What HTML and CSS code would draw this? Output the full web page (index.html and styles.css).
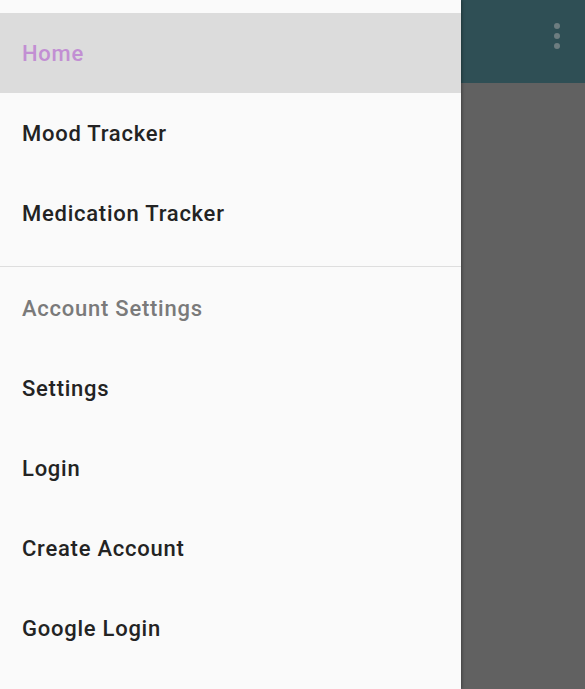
FILE: index.html
```html
<!DOCTYPE html>
<html>
<head>
<meta charset="utf-8">
<link rel="stylesheet" href="styles.css">
</head>
<body>
<div class="screen">
  <nav class="drawer">
    <div class="drawer-top"></div>
    <div class="item active">Home</div>
    <div class="item">Mood Tracker</div>
    <div class="item">Medication Tracker</div>
    <div class="divider"></div>
    <div class="item header">Account Settings</div>
    <div class="item">Settings</div>
    <div class="item">Login</div>
    <div class="item">Create Account</div>
    <div class="item">Google Login</div>
  </nav>
  <div class="content">
    <div class="toolbar">
      <div class="menu-dots"><span></span><span></span><span></span></div>
    </div>
    <div class="scrim"></div>
  </div>
</div>
</body>
</html>
```
FILE: styles.css
```css
html, body {
  margin: 0;
  padding: 0;
  height: 100%;
  overflow: hidden;
}
body {
  font-family: Roboto, "Noto Sans", sans-serif;
}
.screen {
  display: flex;
  width: 585px;
  height: 689px;
}
.drawer {
  width: 461px;
  flex: none;
  background: #fafafa;
  display: flex;
  flex-direction: column;
  position: relative;
  z-index: 1;
  box-shadow: 1px 0 3px rgba(0,0,0,0.35);
}
.drawer-top {
  height: 13px;
  flex: none;
}
.item {
  height: 80px;
  flex: none;
  display: flex;
  align-items: center;
  padding-left: 22px;
  padding-top: 1px;
  box-sizing: border-box;
  font-size: 22px;
  font-weight: 500;
  color: #232323;
  letter-spacing: 0.75px;
}
.item.active {
  background: #dcdcdc;
  color: #c28fd3;
}
.item.header {
  color: #7a7a7a;
  height: 81px;
}
.divider {
  margin-top: 13px;
  height: 1px;
  background: #dedede;
  flex: none;
}
.content {
  flex: 1;
  display: flex;
  flex-direction: column;
}
.toolbar {
  height: 83px;
  background: #2f4f55;
  display: flex;
  justify-content: flex-end;
  padding-right: 25px;
  padding-top: 23px;
  box-sizing: border-box;
}
.menu-dots {
  display: flex;
  flex-direction: column;
  gap: 4px;
}
.menu-dots span {
  width: 6px;
  height: 6px;
  border-radius: 50%;
  background: #6d7d80;
}
.scrim {
  flex: 1;
  background: #616161;
}
```
